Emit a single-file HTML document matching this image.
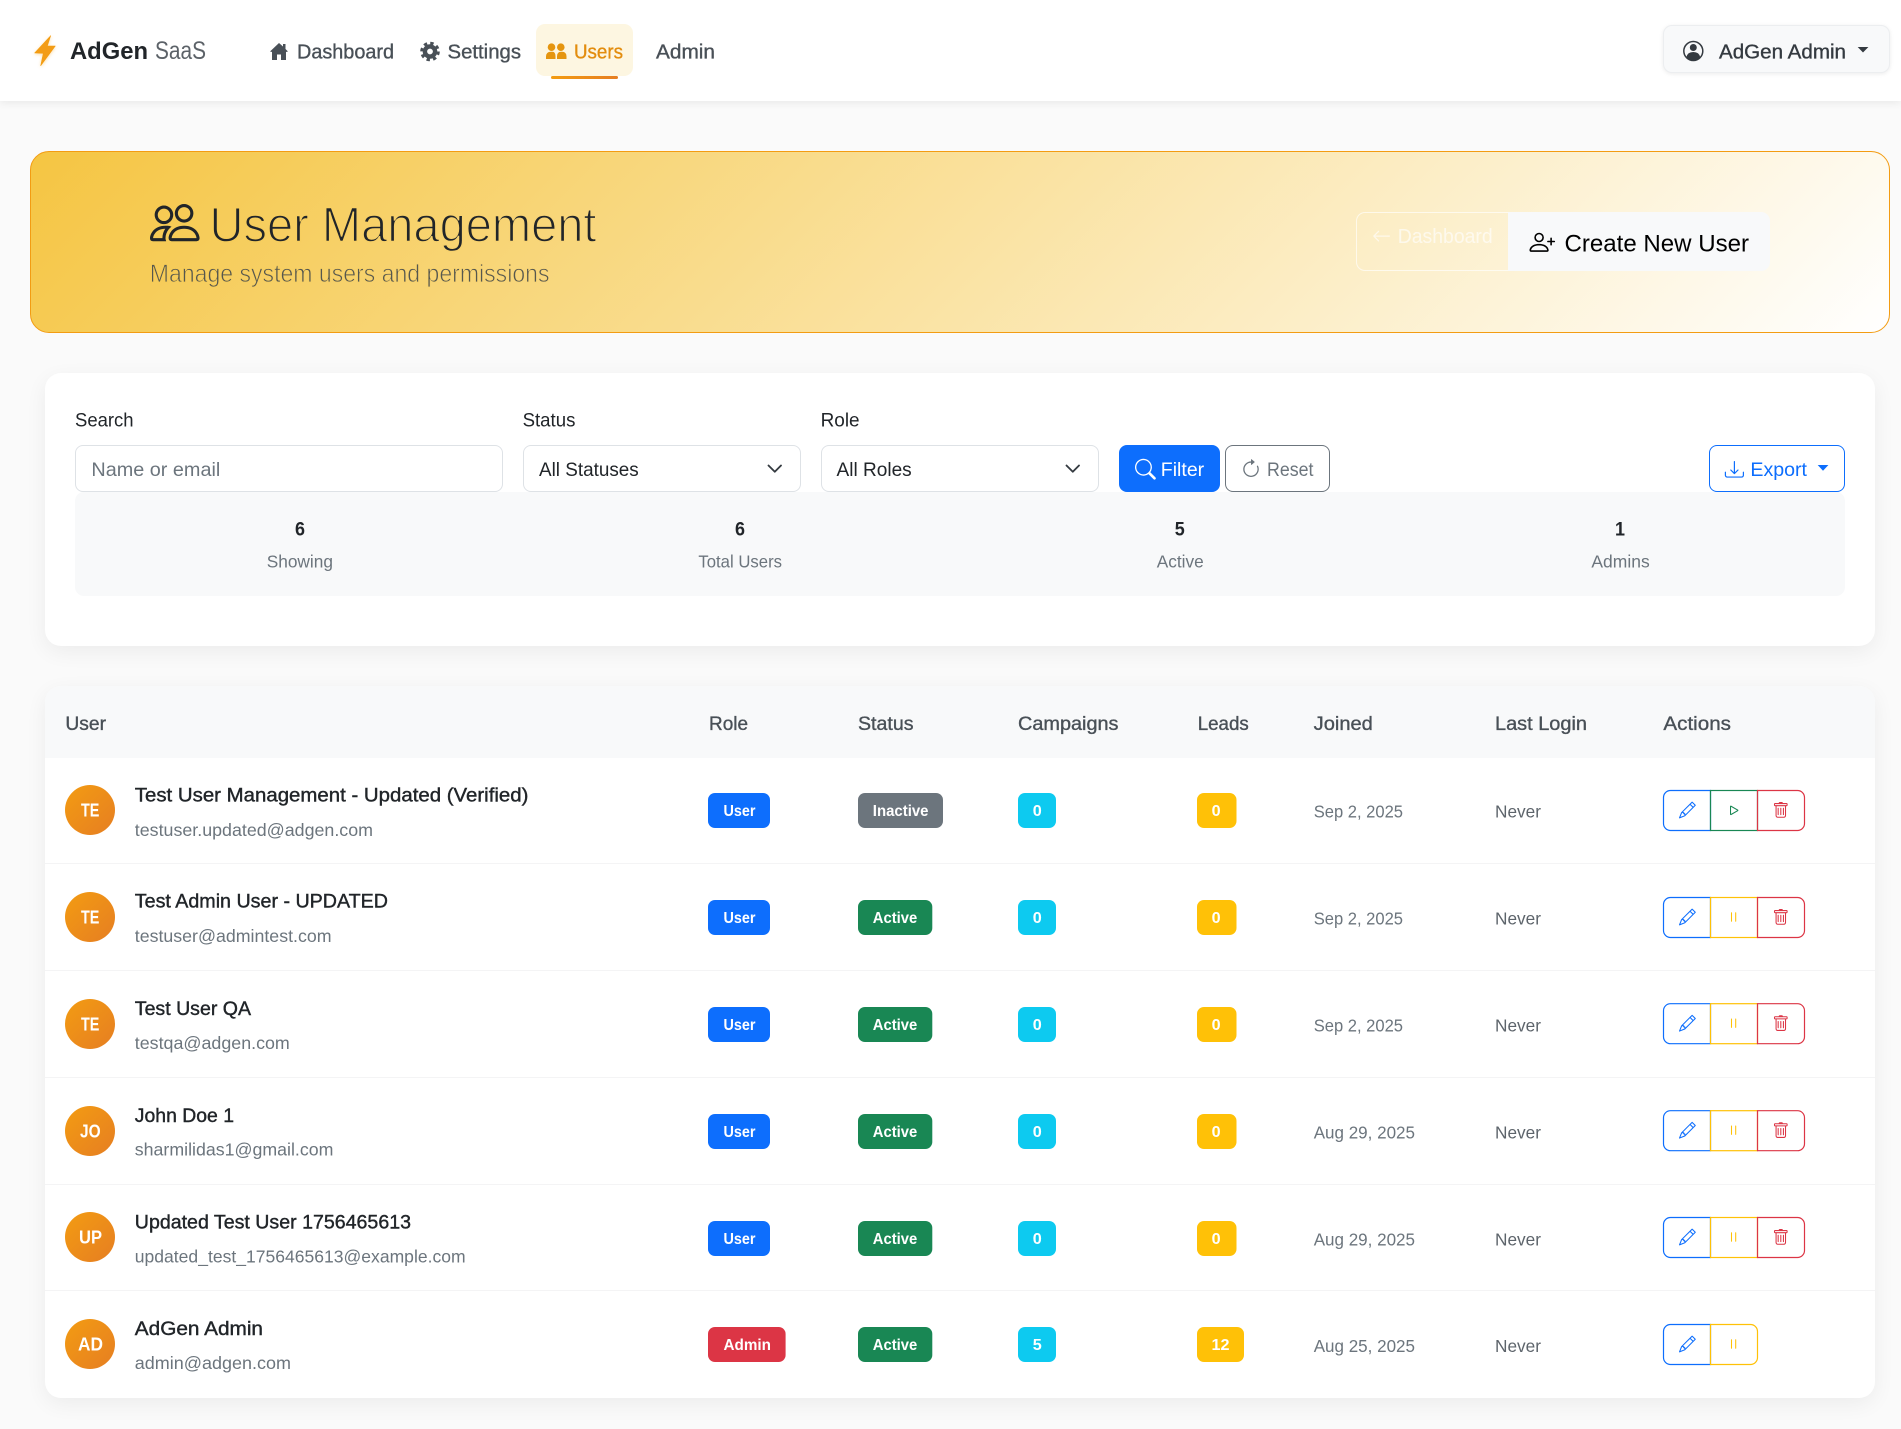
<!DOCTYPE html>
<html lang="en"><head><meta charset="utf-8"><title>User Management - AdGen SaaS</title>
<style>
html,body{margin:0;padding:0;background:#fafafa}
body{position:relative;width:1901px;height:1429px;overflow:hidden;font-family:"Liberation Sans",sans-serif}
.b{position:absolute;box-sizing:border-box}
svg.o{position:absolute;left:0;top:0}
svg text{font-family:"Liberation Sans",sans-serif;white-space:pre}
.nv{font-size:20px;fill:#495057;stroke:#495057;stroke-width:.35}
.lb{font-size:19.5px;fill:#212529}
.fv{font-size:19.5px;fill:#212529}
.ph{font-size:19.5px;fill:#6c757d}
.st{font-size:19.5px;font-weight:700;fill:#212529}
.sl{font-size:17.5px;fill:#6c757d}
.th{font-size:19.5px;fill:#495057;stroke:#495057;stroke-width:.35}
.nm{font-size:19.5px;fill:#212529;stroke:#212529;stroke-width:.4}
.em{font-size:17.5px;fill:#6c757d}
.av{font-size:18px;font-weight:700;fill:#fff}
.bd{font-size:15.5px;font-weight:700;fill:#fff}
.dt{font-size:17.5px;fill:#6c757d}
.nv2{font-size:17.5px;fill:#5d646b}
</style></head><body>
<nav class="b" style="left:0;top:0;width:1901px;height:101px;background:#fff;box-shadow:0 2px 8px rgba(0,0,0,.07)"></nav>
<div class="b" style="left:536px;top:24px;width:97px;height:52px;background:#fdf6e1;border-radius:9px"></div>
<div class="b" style="left:551px;top:76px;width:67px;height:3px;background:linear-gradient(90deg,#f39c12,#e67e22);border-radius:2px"></div>
<div class="b" style="left:1663px;top:25px;width:226.500px;height:48px;background:#f8f9fa;border:1px solid #eceef0;border-radius:9px;box-shadow:0 1px 4px rgba(0,0,0,.08)"></div>

<div class="b" style="left:30px;top:151px;width:1859.500px;height:182px;border:1px solid #f39c12;border-radius:19px;background:linear-gradient(135deg,#f5c542,#fff)"></div>
<div class="b" style="left:1356px;top:212px;width:152px;height:59px;border:1px solid rgba(255,255,255,.65);border-right:0;border-radius:9px 0 0 9px"></div>
<div class="b" style="left:1508px;top:212px;width:261.500px;height:59px;background:#f8f9fa;border-radius:0 9px 9px 0"></div>

<div class="b" style="left:45px;top:373px;width:1830px;height:273px;background:#fff;border-radius:16px;box-shadow:0 6px 22px rgba(0,0,0,.06)"></div>
<div class="b" style="left:75px;top:491.500px;width:1769.500px;height:104.500px;background:#f8f9fa;border-radius:9px"></div>
<div class="b" style="left:75px;top:445px;width:428px;height:47px;background:#fff;border:1px solid #dee2e6;border-radius:8px"></div>
<div class="b" style="left:523px;top:445px;width:278px;height:47px;background:#fff;border:1px solid #dee2e6;border-radius:8px"></div>
<div class="b" style="left:821px;top:445px;width:278px;height:47px;background:#fff;border:1px solid #dee2e6;border-radius:8px"></div>
<div class="b" style="left:1119px;top:445px;width:101px;height:47px;background:#0d6efd;border-radius:8px"></div>
<div class="b" style="left:1225px;top:445px;width:105px;height:47px;background:#fff;border:1px solid #6c757d;border-radius:8px"></div>
<div class="b" style="left:1709px;top:445px;width:135.500px;height:47px;background:#fff;border:1px solid #0d6efd;border-radius:8px"></div>

<div class="b" style="left:45px;top:686px;width:1830px;height:712px;background:#fff;border-radius:16px;box-shadow:0 6px 22px rgba(0,0,0,.06);overflow:hidden">
<div class="b" style="left:0;top:0;width:1830px;height:72px;background:#f8f9fa"></div>
<div class="b" style="left:0;top:177px;width:1830px;height:1px;background:#f4f4f5"></div>
<div class="b" style="left:0;top:284px;width:1830px;height:1px;background:#f4f4f5"></div>
<div class="b" style="left:0;top:391px;width:1830px;height:1px;background:#f4f4f5"></div>
<div class="b" style="left:0;top:498px;width:1830px;height:1px;background:#f4f4f5"></div>
<div class="b" style="left:0;top:604px;width:1830px;height:1px;background:#f4f4f5"></div>
</div>

<svg class="o" width="1901" height="1429" viewBox="0 0 1901 1429" xmlns="http://www.w3.org/2000/svg">
<defs>
<linearGradient id="ag" x1="0" y1="0" x2="1" y2="1"><stop offset="0" stop-color="#f39c12"/><stop offset="1" stop-color="#e67e22"/></linearGradient>
<linearGradient id="hs" gradientUnits="userSpaceOnUse" x1="150" y1="0" x2="600" y2="0"><stop offset="0" stop-color="#f6ca52"/><stop offset="1" stop-color="#f8d67c"/></linearGradient>
<filter id="gl" x="-50%" y="-50%" width="200%" height="200%"><feDropShadow dx="0" dy="1" stdDeviation="1.6" flood-color="#f39c12" flood-opacity=".35"/></filter>
<g id="pencil" transform="translate(1679,801.600) scale(1.05)" fill="#0d6efd"><path d="M12.146.146a.5.5 0 0 1 .708 0l3 3a.5.5 0 0 1 0 .708l-10 10a.5.5 0 0 1-.168.11l-5 2a.5.5 0 0 1-.65-.65l2-5a.5.5 0 0 1 .11-.168l10-10zM11.207 2.5 13.500 4.793 14.793 3.500 12.500 1.207 11.207 2.500zm1.586 3L10.500 3.207 4 9.707V10h.5a.5.5 0 0 1 .5.5v.5h.5a.5.5 0 0 1 .5.5v.5h.293l6.500-6.500zm-9.761 5.175-.106.106-1.528 3.821 3.821-1.528.106-.106A.5.5 0 0 1 5 12.500V12h-.5a.5.5 0 0 1-.5-.5V11h-.5a.5.5 0 0 1-.468-.325z"/></g>
<g id="trash" transform="translate(1772.400,802) scale(1.05)" fill="#dc3545"><path d="M5.500 5.500A.5.5 0 0 1 6 6v6a.5.5 0 0 1-1 0V6a.5.5 0 0 1 .5-.5zm2.500 0a.5.5 0 0 1 .5.5v6a.5.5 0 0 1-1 0V6a.5.5 0 0 1 .5-.5zm3 .5a.5.5 0 0 0-1 0v6a.5.5 0 0 0 1 0V6z"/><path fill-rule="evenodd" d="M14.500 3a1 1 0 0 1-1 1H13v9a2 2 0 0 1-2 2H5a2 2 0 0 1-2-2V4h-.5a1 1 0 0 1-1-1V2a1 1 0 0 1 1-1H6a1 1 0 0 1 1-1h2a1 1 0 0 1 1 1h3.500a1 1 0 0 1 1 1v1zM4.118 4 4 4.059V13a1 1 0 0 0 1 1h6a1 1 0 0 0 1-1V4.059L11.882 4H4.118zM2.500 3V2h11v1h-11z"/></g>
<g id="play" transform="translate(1725.800,802) scale(1.05)" fill="#198754"><path d="M10.804 8 5 4.633v6.734L10.804 8zm.792-.696a.802.802 0 0 1 0 1.392l-6.363 3.692C4.713 12.690 4 12.345 4 11.692V4.308c0-.653.713-.998 1.233-.696l6.363 3.692z"/></g>
<g id="pause" transform="translate(1725.200,801.600) scale(1.05)" fill="#ffc107"><path d="M6 3.500a.5.5 0 0 1 .5.5v8a.5.5 0 0 1-1 0V4a.5.5 0 0 1 .5-.5zm4 0a.5.5 0 0 1 .5.5v8a.5.5 0 0 1-1 0V4a.5.5 0 0 1 .5-.5z"/></g>
<path id="bL" d="M1710.500 790.500H1670.500a7 7 0 0 0-7 7v26a7 7 0 0 0 7 7H1710.500z" fill="none" stroke="#0d6efd" stroke-width="1.2"/>
<rect id="bMy" x="1710.500" y="790.500" width="47" height="40" fill="none" stroke="#ffc107" stroke-width="1.2"/>
<rect id="bMg" x="1710.500" y="790.500" width="47" height="40" fill="none" stroke="#198754" stroke-width="1.2"/>
<path id="bR" d="M1757.500 790.500H1797.500a7 7 0 0 1 7 7v26a7 7 0 0 1-7 7H1757.500z" fill="none" stroke="#dc3545" stroke-width="1.2"/>
<path id="bRy" d="M1710.500 790.500H1750.500a7 7 0 0 1 7 7v26a7 7 0 0 1-7 7H1710.500z" fill="none" stroke="#ffc107" stroke-width="1.2"/>
<g id="uB"><rect x="708" y="793" width="62" height="35" rx="7" fill="#0d6efd"/><text class="bd" x="723.500" y="816" textLength="32" lengthAdjust="spacingAndGlyphs">User</text></g>
<g id="aB"><rect x="858" y="793" width="74.300" height="35" rx="7" fill="#198754"/><text class="bd" x="872.800" y="816" textLength="44.500" lengthAdjust="spacingAndGlyphs">Active</text></g>
<g id="cB"><rect x="1018" y="793" width="38" height="35" rx="7" fill="#0dcaf0"/><text class="bd" x="1032.800" y="816" textLength="9" lengthAdjust="spacingAndGlyphs">0</text></g>
<g id="lB"><rect x="1197" y="793" width="39.500" height="35" rx="7" fill="#ffc107"/><text class="bd" x="1211.600" y="816" textLength="9" lengthAdjust="spacingAndGlyphs">0</text></g>
<g id="acts"><use href="#bL"/><use href="#bMy"/><use href="#bR"/><use href="#pencil"/><use href="#pause"/><use href="#trash"/></g>
<circle id="avc" cx="90" cy="810" r="25" fill="url(#ag)"/>
</defs>

<!-- Navbar -->
<path filter="url(#gl)" fill="#f39c12" d="M50.700 35.700 34.700 53 43.300 53.300 40.700 65.700 55.300 46 47.300 46Z" stroke="#f39c12" stroke-width=".6" stroke-linejoin="round"/>
<text x="70" y="59" font-size="24" font-weight="700" fill="#212529" textLength="78" lengthAdjust="spacingAndGlyphs">AdGen</text>
<text x="155" y="59" font-size="25" fill="#5c6268" textLength="51" lengthAdjust="spacingAndGlyphs">SaaS</text>
<path fill="#495057" d="M279 43 270 51.500 272 52V60H277V54.500H281V60H286V52L288 51.500 285.500 49V44H283V46.500Z"/>
<text class="nv" x="297" y="58.500" textLength="97" lengthAdjust="spacingAndGlyphs">Dashboard</text>
<g fill="none" stroke="#495057"><circle cx="430" cy="51.500" r="5.100" stroke-width="4.400"/><circle cx="430" cy="51.500" r="8.400" stroke-width="2.800" stroke-dasharray="3.400 3.197"/></g>
<text class="nv" x="447.500" y="58.500" textLength="73.500" lengthAdjust="spacingAndGlyphs">Settings</text>
<g fill="#e5950f"><circle cx="551.500" cy="47.200" r="3.800"/><circle cx="560.800" cy="47.200" r="3.800"/><path d="M546 59V56.500Q546 51.700 551 51.700H552.500Q555.500 51.700 555.500 56.500V59Z"/><path d="M557 59V56.500Q557 51.700 561 51.700H562Q566.500 51.700 566.500 56.500V59Z"/></g>
<text x="574" y="58.500" font-size="20" fill="#e38d0e" stroke="#e38d0e" stroke-width=".35" textLength="49" lengthAdjust="spacingAndGlyphs">Users</text>
<text class="nv" x="656" y="58.500" textLength="59" lengthAdjust="spacingAndGlyphs">Admin</text>
<circle cx="1693.300" cy="51" r="9.500" fill="none" stroke="#343a40" stroke-width="1.500"/><circle cx="1693.300" cy="47.500" r="3.500" fill="#343a40"/><path fill="#343a40" d="M1686.500 57Q1687.500 52 1693.300 52T1700.100 57Q1697 60.500 1693.300 60.500T1686.500 57Z"/>
<text x="1719" y="58.300" font-size="20" fill="#343a40" stroke="#343a40" stroke-width=".35" textLength="127" lengthAdjust="spacingAndGlyphs">AdGen Admin</text>
<path fill="#343a40" d="M1857.700 47H1868.400L1863 52.500Z"/>

<!-- Hero -->
<g transform="translate(150,197.800) scale(3.100)" fill="#212529"><path fill-rule="evenodd" d="M15 14s1 0 1-1-1-4-5-4-5 3-5 4 1 1 1 1h8zm-7.978-1A.261.261 0 0 1 7 12.996c.001-.264.167-1.030.76-1.720C8.312 10.629 9.282 10 11 10c1.717 0 2.687.63 3.240 1.276.593.69.758 1.457.76 1.720l-.008.002a.274.274 0 0 1-.014.002H7.022zM11 7a2 2 0 1 0 0-4 2 2 0 0 0 0 4zm3-2a3 3 0 1 1-6 0 3 3 0 0 1 6 0zM6.936 9.280a5.880 5.880 0 0 0-1.230-.247A7.350 7.350 0 0 0 5 9c-4 0-5 3-5 4 0 .667.333 1 1 1h4.216A2.238 2.238 0 0 1 5 13c0-1.010.377-2.042 1.090-2.904.243-.294.526-.569.846-.816zM4.920 10A5.493 5.493 0 0 0 4 13H1c0-.26.164-1.030.76-1.724.545-.636 1.492-1.256 3.160-1.275zM1.500 5.500a3 3 0 1 1 6 0 3 3 0 0 1-6 0zm3-2a2 2 0 1 0 0 4 2 2 0 0 0 0-4z"/></g>
<text x="209.500" y="241.700" font-size="49" fill="#212529" stroke="url(#hs)" stroke-width="1.500" textLength="387" lengthAdjust="spacingAndGlyphs">User Management</text>
<text x="149.800" y="281.900" font-size="25" fill="#55574f" stroke="url(#hs)" stroke-width=".75" textLength="399.700" lengthAdjust="spacingAndGlyphs">Manage system users and permissions</text>
<g transform="translate(1372,226.500) scale(1.200)" fill="#fff" opacity=".65"><path d="M15 8a.5.5 0 0 0-.5-.5H2.707l3.147-3.146a.5.5 0 1 0-.708-.708l-4 4a.5.5 0 0 0 0 .708l4 4a.5.5 0 0 0 .708-.708L2.707 8.500H14.500A.5.5 0 0 0 15 8z"/></g>
<text x="1397.700" y="243" font-size="20" fill="#fff" opacity=".65" textLength="95" lengthAdjust="spacingAndGlyphs">Dashboard</text>
<g transform="translate(1529.500,229.500) scale(1.600)" fill="#000"><path fill-rule="evenodd" d="M6 8a3 3 0 1 0 0-6 3 3 0 0 0 0 6zm2-3a2 2 0 1 1-4 0 2 2 0 0 1 4 0zm4 8c0 1-1 1-1 1H1s-1 0-1-1 1-4 6-4 6 3 6 4zm-1-.004c-.001-.246-.154-.986-.832-1.664C9.516 10.680 8.289 10 6 10c-2.290 0-3.516.68-4.168 1.332-.678.678-.83 1.418-.832 1.664h10z"/><path d="M13.500 5a.5.5 0 0 1 .5.5V7h1.500a.5.5 0 0 1 0 1H14v1.500a.5.5 0 0 1-1 0V8h-1.500a.5.5 0 0 1 0-1H13V5.500a.5.5 0 0 1 .5-.5z"/></g>
<text x="1564.500" y="251.700" font-size="24.500" fill="#000" textLength="184.500" lengthAdjust="spacingAndGlyphs">Create New User</text>

<!-- Filters -->
<text class="lb" x="75" y="426.400" textLength="58.600" lengthAdjust="spacingAndGlyphs">Search</text>
<text class="lb" x="522.600" y="426.400" textLength="52.800" lengthAdjust="spacingAndGlyphs">Status</text>
<text class="lb" x="820.600" y="426.400" textLength="39" lengthAdjust="spacingAndGlyphs">Role</text>
<text class="ph" x="91.400" y="476" textLength="128.900" lengthAdjust="spacingAndGlyphs">Name or email</text>
<text class="fv" x="539" y="476" textLength="99.700" lengthAdjust="spacingAndGlyphs">All Statuses</text>
<text class="fv" x="836.500" y="476" textLength="75.200" lengthAdjust="spacingAndGlyphs">All Roles</text>
<path d="M768.500 465.500 774.800 471.800 781 465.500M1066.500 465.500 1072.800 471.800 1079 465.500" fill="none" stroke="#343a40" stroke-width="1.800" stroke-linecap="round" stroke-linejoin="round"/>
<g transform="translate(1135,458.800) scale(1.300)" fill="#fff"><path d="M11.742 10.344a6.500 6.500 0 1 0-1.397 1.398h-.001c.03.04.062.078.098.115l3.850 3.850a1 1 0 0 0 1.415-1.414l-3.850-3.850a1.007 1.007 0 0 0-.115-.1zM12 6.500a5.500 5.500 0 1 1-11 0 5.500 5.500 0 0 1 11 0z"/></g>
<text x="1160.800" y="476" font-size="19.500" fill="#fff" textLength="43.400" lengthAdjust="spacingAndGlyphs">Filter</text>
<g transform="translate(1240.600,458.800) scale(1.300)" fill="#6c757d"><path fill-rule="evenodd" d="M8 3a5 5 0 1 0 4.546 2.914.5.5 0 0 1 .908-.417A6 6 0 1 1 8 2v1z"/><path d="M8 4.466V.534a.25.25 0 0 1 .41-.192l2.360 1.966c.12.1.12.284 0 .384L8.410 4.658A.25.25 0 0 1 8 4.466z"/></g>
<text x="1267" y="476" font-size="19.500" fill="#6c757d" textLength="46.500" lengthAdjust="spacingAndGlyphs">Reset</text>
<g transform="translate(1724.800,459.800) scale(1.200)" fill="#0d6efd"><path d="M.5 9.900a.5.5 0 0 1 .5.5v2.500a1 1 0 0 0 1 1h12a1 1 0 0 0 1-1v-2.500a.5.5 0 0 1 1 0v2.500a2 2 0 0 1-2 2H2a2 2 0 0 1-2-2v-2.500a.5.5 0 0 1 .5-.5z"/><path d="M7.646 11.854a.5.5 0 0 0 .708 0l3-3a.5.5 0 0 0-.708-.708L8.500 10.293V1.500a.5.5 0 0 0-1 0v8.793L5.354 8.146a.5.5 0 1 0-.708.708l3 3z"/></g>
<text x="1750.400" y="476" font-size="19.500" fill="#0d6efd" textLength="56.600" lengthAdjust="spacingAndGlyphs">Export</text>
<path fill="#0d6efd" d="M1817.700 465H1828.400L1823 470.700Z"/>

<!-- Stats -->
<text class="st" x="295" y="535.300" textLength="10" lengthAdjust="spacingAndGlyphs">6</text>
<text class="st" x="735" y="535.300" textLength="10" lengthAdjust="spacingAndGlyphs">6</text>
<text class="st" x="1174.700" y="535.300" textLength="10" lengthAdjust="spacingAndGlyphs">5</text>
<text class="st" x="1615" y="535.300" textLength="10" lengthAdjust="spacingAndGlyphs">1</text>
<text class="sl" x="266.700" y="567.500" textLength="66.300" lengthAdjust="spacingAndGlyphs">Showing</text>
<text class="sl" x="698.400" y="567.500" textLength="83.600" lengthAdjust="spacingAndGlyphs">Total Users</text>
<text class="sl" x="1156.700" y="567.500" textLength="47" lengthAdjust="spacingAndGlyphs">Active</text>
<text class="sl" x="1591.400" y="567.500" textLength="58.300" lengthAdjust="spacingAndGlyphs">Admins</text>

<!-- Table head -->
<text class="th" x="65.400" y="730" textLength="40.600" lengthAdjust="spacingAndGlyphs">User</text>
<text class="th" x="709" y="730" textLength="39" lengthAdjust="spacingAndGlyphs">Role</text>
<text class="th" x="858" y="730" textLength="55.500" lengthAdjust="spacingAndGlyphs">Status</text>
<text class="th" x="1018" y="730" textLength="100.500" lengthAdjust="spacingAndGlyphs">Campaigns</text>
<text class="th" x="1197.700" y="730" textLength="51.100" lengthAdjust="spacingAndGlyphs">Leads</text>
<text class="th" x="1313.700" y="730" textLength="59.100" lengthAdjust="spacingAndGlyphs">Joined</text>
<text class="th" x="1495" y="730" textLength="92" lengthAdjust="spacingAndGlyphs">Last Login</text>
<text class="th" x="1663.400" y="730" textLength="67.600" lengthAdjust="spacingAndGlyphs">Actions</text>

<!-- Row 1 -->
<g>
<use href="#avc"/><text class="av" x="81" y="816.700" textLength="18.400" lengthAdjust="spacingAndGlyphs">TE</text>
<text class="nm" x="134.800" y="801.700" textLength="393.600" lengthAdjust="spacingAndGlyphs">Test User Management - Updated (Verified)</text>
<text class="em" x="134.800" y="835.800" textLength="238.200" lengthAdjust="spacingAndGlyphs">testuser.updated@adgen.com</text>
<use href="#uB"/>
<rect x="858" y="793" width="85" height="35" rx="7" fill="#6c757d"/><text class="bd" x="872.800" y="816" textLength="55.700" lengthAdjust="spacingAndGlyphs">Inactive</text>
<use href="#cB"/><use href="#lB"/>
<text class="dt" x="1313.700" y="817.700" textLength="89.300" lengthAdjust="spacingAndGlyphs">Sep 2, 2025</text>
<text class="nv2" x="1495" y="817.700" textLength="46" lengthAdjust="spacingAndGlyphs">Never</text>
<use href="#bL"/><use href="#bMg"/><use href="#bR"/><use href="#pencil"/><use href="#play"/><use href="#trash"/>
</g>
<!-- Row 2 -->
<g transform="translate(0,107)">
<use href="#avc"/><text class="av" x="81" y="816.700" textLength="18.400" lengthAdjust="spacingAndGlyphs">TE</text>
<text class="nm" x="134.800" y="800.700" textLength="253.200" lengthAdjust="spacingAndGlyphs">Test Admin User - UPDATED</text>
<text class="em" x="134.800" y="835" textLength="196.700" lengthAdjust="spacingAndGlyphs">testuser@admintest.com</text>
<use href="#uB"/><use href="#aB"/><use href="#cB"/><use href="#lB"/>
<text class="dt" x="1313.700" y="817.700" textLength="89.300" lengthAdjust="spacingAndGlyphs">Sep 2, 2025</text>
<text class="nv2" x="1495" y="817.700" textLength="46" lengthAdjust="spacingAndGlyphs">Never</text>
<use href="#acts"/>
</g>
<!-- Row 3 -->
<g transform="translate(0,214)">
<use href="#avc"/><text class="av" x="81" y="816.700" textLength="18.400" lengthAdjust="spacingAndGlyphs">TE</text>
<text class="nm" x="134.800" y="801" textLength="116.200" lengthAdjust="spacingAndGlyphs">Test User QA</text>
<text class="em" x="134.800" y="834.800" textLength="155" lengthAdjust="spacingAndGlyphs">testqa@adgen.com</text>
<use href="#uB"/><use href="#aB"/><use href="#cB"/><use href="#lB"/>
<text class="dt" x="1313.700" y="817.700" textLength="89.300" lengthAdjust="spacingAndGlyphs">Sep 2, 2025</text>
<text class="nv2" x="1495" y="817.700" textLength="46" lengthAdjust="spacingAndGlyphs">Never</text>
<g transform="translate(0,-.8)"><use href="#acts"/></g>
</g>
<!-- Row 4 -->
<g transform="translate(0,321)">
<use href="#avc"/><text class="av" x="80" y="816.700" textLength="20.600" lengthAdjust="spacingAndGlyphs">JO</text>
<text class="nm" x="134.800" y="801" textLength="99.200" lengthAdjust="spacingAndGlyphs">John Doe 1</text>
<text class="em" x="134.800" y="834.600" textLength="198.600" lengthAdjust="spacingAndGlyphs">sharmilidas1@gmail.com</text>
<use href="#uB"/><use href="#aB"/><use href="#cB"/><use href="#lB"/>
<text class="dt" x="1313.700" y="817.700" textLength="101.300" lengthAdjust="spacingAndGlyphs">Aug 29, 2025</text>
<text class="nv2" x="1495" y="817.700" textLength="46" lengthAdjust="spacingAndGlyphs">Never</text>
<g transform="translate(0,-.8)"><use href="#acts"/></g>
</g>
<!-- Row 5 -->
<g transform="translate(0,427)">
<use href="#avc"/><text class="av" x="79" y="816.700" textLength="23" lengthAdjust="spacingAndGlyphs">UP</text>
<text class="nm" x="134.800" y="801.500" textLength="276.200" lengthAdjust="spacingAndGlyphs">Updated Test User 1756465613</text>
<text class="em" x="134.800" y="835.400" textLength="330.800" lengthAdjust="spacingAndGlyphs">updated_test_1756465613@example.com</text>
<g transform="translate(0,1)"><use href="#uB"/><use href="#aB"/><use href="#cB"/><use href="#lB"/></g>
<text class="dt" x="1313.700" y="818.700" textLength="101.300" lengthAdjust="spacingAndGlyphs">Aug 29, 2025</text>
<text class="nv2" x="1495" y="818.700" textLength="46" lengthAdjust="spacingAndGlyphs">Never</text>
<use href="#acts"/>
</g>
<!-- Row 6 -->
<g transform="translate(0,534)">
<use href="#avc"/><text class="av" x="78" y="816.700" textLength="25" lengthAdjust="spacingAndGlyphs">AD</text>
<text class="nm" x="134.800" y="801" textLength="128.200" lengthAdjust="spacingAndGlyphs">AdGen Admin</text>
<text class="em" x="134.800" y="834.800" textLength="156.200" lengthAdjust="spacingAndGlyphs">admin@adgen.com</text>
<rect x="708" y="793" width="77.600" height="35" rx="7" fill="#dc3545"/><text class="bd" x="723.500" y="816" textLength="47.500" lengthAdjust="spacingAndGlyphs">Admin</text>
<use href="#aB"/>
<rect x="1018" y="793" width="38" height="35" rx="7" fill="#0dcaf0"/><text class="bd" x="1032.800" y="816" textLength="9" lengthAdjust="spacingAndGlyphs">5</text>
<rect x="1197" y="793" width="47" height="35" rx="7" fill="#ffc107"/><text class="bd" x="1211.500" y="816" textLength="18" lengthAdjust="spacingAndGlyphs">12</text>
<text class="dt" x="1313.700" y="817.800" textLength="101.300" lengthAdjust="spacingAndGlyphs">Aug 25, 2025</text>
<text class="nv2" x="1495" y="817.800" textLength="46" lengthAdjust="spacingAndGlyphs">Never</text>
<use href="#bL"/><use href="#bRy"/><use href="#pencil"/><use href="#pause"/>
</g>
</svg>
</body></html>
